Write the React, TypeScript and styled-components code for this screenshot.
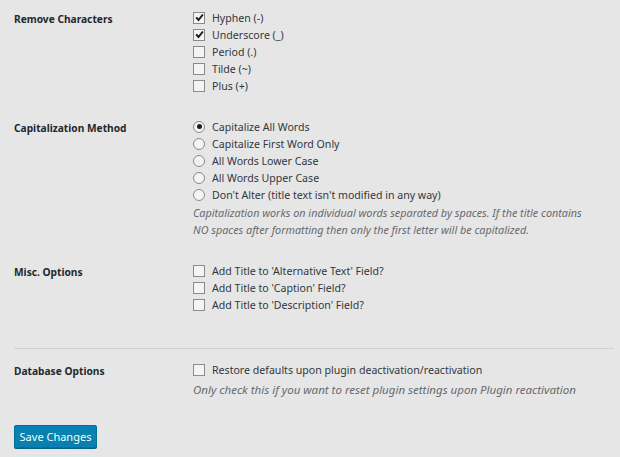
import React from "react";
import styled, { createGlobalStyle } from "styled-components";

const Global = createGlobalStyle`
  html, body { margin: 0; padding: 0; background: #e6e6e6; }
  body { font-family: "Noto Sans", "Open Sans", sans-serif; color: #2f3337; }
`;

const Page = styled.div`
  width: 620px;
  height: 457px;
  box-sizing: border-box;
  padding: 9px 6px 0 14px;
  background: #e6e6e6;
  overflow: hidden;
`;

const Section = styled.div<{ $gap?: number }>`
  display: grid;
  grid-template-columns: 179px 1fr;
  margin-bottom: ${(p) => p.$gap ?? 24}px;
`;

const Label = styled.div`
  font-size: 10.2px;
  font-weight: 700;
  line-height: 17px;
  padding-top: 2px;
  color: #23282d;
`;

const Field = styled.div`
  display: flex;
  flex-direction: column;
`;

const OptionRow = styled.label`
  display: flex;
  align-items: center;
  gap: 7px;
  height: 17px;
  font-size: 10.6px;
  color: #32373c;
  white-space: nowrap;
`;

const Box = styled.span`
  width: 10px;
  height: 10px;
  border: 1px solid #8a8a8a;
  background: #f4f4f4;
  display: inline-flex;
  align-items: center;
  justify-content: center;
  flex: none;
`;

const Radio = styled.span`
  width: 10px;
  height: 10px;
  border: 1px solid #8a8a8a;
  border-radius: 50%;
  background: #f4f4f4;
  display: inline-flex;
  align-items: center;
  justify-content: center;
  flex: none;
`;

const Dot = styled.span`
  width: 5px;
  height: 5px;
  border-radius: 50%;
  background: #1e1e1e;
`;

const Note = styled.p<{ $top?: number; $size?: number }>`
  margin: ${(p) => p.$top ?? 1}px 0 0;
  font-size: ${(p) => p.$size ?? 11}px;
  font-style: italic;
  line-height: 17px;
  color: #666a6e;
  white-space: nowrap;
`;

const Divider = styled.hr`
  border: none;
  border-top: 1px solid #d2d2d2;
  margin: 35px 0 12px;
  width: 600px;
`;

const SaveButton = styled.button`
  margin-top: 27px;
  width: 83px;
  height: 23px;
  padding: 0;
  border: 1px solid #006f9e;
  border-radius: 2px;
  background: #0581b3;
  color: #ffffff;
  font-family: "Noto Sans", sans-serif;
  font-size: 11px;
  box-shadow: 0 1px 0 #00628c;
`;

const Check = () => (
  <svg width="9" height="9" viewBox="0 0 9 9">
    <path d="M1.2 4.4 L3.5 7 L7.9 1.5" fill="none" stroke="#1a1a1a" strokeWidth="2" />
  </svg>
);

const CheckOption = ({ checked, children }: { checked?: boolean; children: React.ReactNode }) => (
  <OptionRow>
    <Box>{checked && <Check />}</Box>
    <span>{children}</span>
  </OptionRow>
);

const RadioOption = ({ checked, children }: { checked?: boolean; children: React.ReactNode }) => (
  <OptionRow>
    <Radio>{checked && <Dot />}</Radio>
    <span>{children}</span>
  </OptionRow>
);

export default function App() {
  return (
    <Page>
      <Global />
      <Section>
        <Label>Remove Characters</Label>
        <Field>
          <CheckOption checked>Hyphen (-)</CheckOption>
          <CheckOption checked>Underscore (_)</CheckOption>
          <CheckOption>Period (.)</CheckOption>
          <CheckOption>Tilde (~)</CheckOption>
          <CheckOption>Plus (+)</CheckOption>
        </Field>
      </Section>
      <Section>
        <Label>Capitalization Method</Label>
        <Field>
          <RadioOption checked>Capitalize All Words</RadioOption>
          <RadioOption>Capitalize First Word Only</RadioOption>
          <RadioOption>All Words Lower Case</RadioOption>
          <RadioOption>All Words Upper Case</RadioOption>
          <RadioOption>Don't Alter (title text isn't modified in any way)</RadioOption>
          <Note $size={10.8}>
            Capitalization works on individual words separated by spaces. If the title contains
            <br />
            NO spaces after formatting then only the first letter will be capitalized.
          </Note>
        </Field>
      </Section>
      <Section $gap={0}>
        <Label>Misc. Options</Label>
        <Field>
          <CheckOption>Add Title to 'Alternative Text' Field?</CheckOption>
          <CheckOption>Add Title to 'Caption' Field?</CheckOption>
          <CheckOption>Add Title to 'Description' Field?</CheckOption>
        </Field>
      </Section>
      <Divider />
      <Section $gap={0}>
        <Label>Database Options</Label>
        <Field>
          <CheckOption>Restore defaults upon plugin deactivation/reactivation</CheckOption>
          <Note $top={3} $size={11.5}>Only check this if you want to reset plugin settings upon Plugin reactivation</Note>
        </Field>
      </Section>
      <SaveButton>Save Changes</SaveButton>
    </Page>
  );
}
